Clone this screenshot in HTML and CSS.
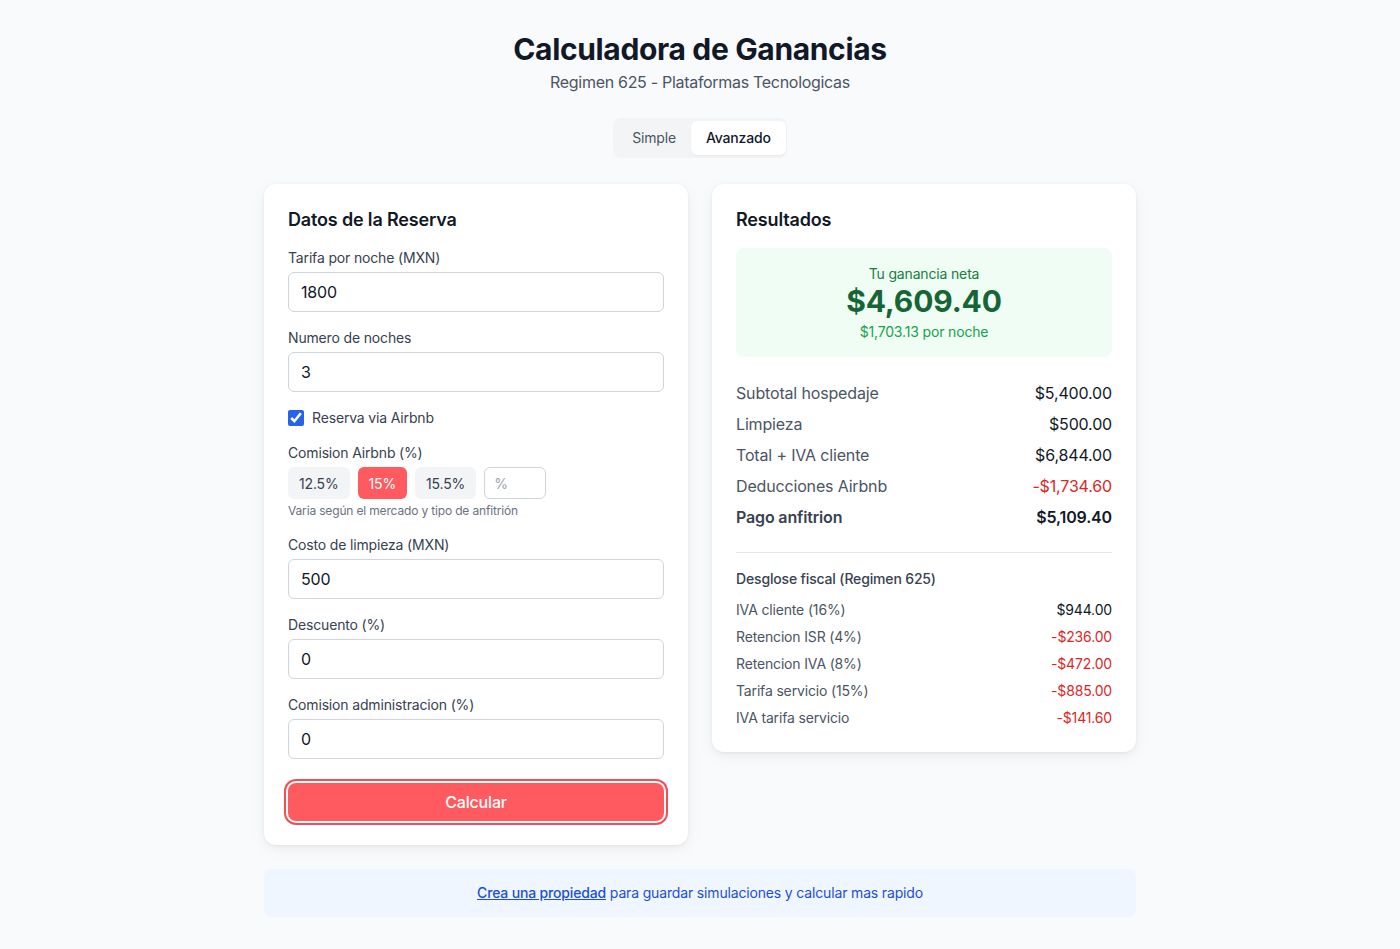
FILE: index.html
```html
<!DOCTYPE html>
<html lang="es">
<head>
<meta charset="utf-8">
<title>Calculadora de Ganancias</title>
<link rel="stylesheet" href="styles.css">
</head>
<body>
<main class="page">
  <header class="header">
    <h1 class="title">Calculadora de Ganancias</h1>
    <p class="subtitle">Regimen 625 - Plataformas Tecnologicas</p>
  </header>

  <div class="toggle-wrap">
    <div class="toggle">
      <button class="tab">Simple</button>
      <button class="tab tab-active">Avanzado</button>
    </div>
  </div>

  <div class="grid">
    <section class="card">
      <h2 class="card-title">Datos de la Reserva</h2>
      <div class="fields">
        <div class="field">
          <label class="label">Tarifa por noche (MXN)</label>
          <input class="input" type="text" value="1800">
        </div>
        <div class="field">
          <label class="label">Numero de noches</label>
          <input class="input" type="text" value="3">
        </div>
        <label class="check-row">
          <input class="check" type="checkbox" checked>
          <span>Reserva via Airbnb</span>
        </label>
        <div class="field">
          <label class="label">Comision Airbnb (%)</label>
          <div class="pct-row">
            <button class="pct">12.5%</button>
            <button class="pct pct-active">15%</button>
            <button class="pct">15.5%</button>
            <input class="pct-input" type="text" placeholder="%">
          </div>
          <p class="help">Varia según el mercado y tipo de anfitrión</p>
        </div>
        <div class="field">
          <label class="label">Costo de limpieza (MXN)</label>
          <input class="input" type="text" value="500">
        </div>
        <div class="field">
          <label class="label">Descuento (%)</label>
          <input class="input" type="text" value="0">
        </div>
        <div class="field">
          <label class="label">Comision administracion (%)</label>
          <input class="input" type="text" value="0">
        </div>
      </div>
      <button class="submit">Calcular</button>
    </section>

    <section class="card card-results">
      <h2 class="card-title">Resultados</h2>
      <div class="net">
        <div class="net-label">Tu ganancia neta</div>
        <div class="net-amount">$4,609.40</div>
        <div class="net-sub">$1,703.13 por noche</div>
      </div>
      <div class="rows">
        <div class="row"><span>Subtotal hospedaje</span><span class="val">$5,400.00</span></div>
        <div class="row"><span>Limpieza</span><span class="val">$500.00</span></div>
        <div class="row"><span>Total + IVA cliente</span><span class="val">$6,844.00</span></div>
        <div class="row"><span>Deducciones Airbnb</span><span class="val neg">-$1,734.60</span></div>
        <div class="row row-strong"><span>Pago anfitrion</span><span class="val">$5,109.40</span></div>
      </div>
      <div class="fiscal">
        <h3 class="fiscal-title">Desglose fiscal (Regimen 625)</h3>
        <div class="frows">
          <div class="frow"><span>IVA cliente (16%)</span><span class="val">$944.00</span></div>
          <div class="frow"><span>Retencion ISR (4%)</span><span class="val neg">-$236.00</span></div>
          <div class="frow"><span>Retencion IVA (8%)</span><span class="val neg">-$472.00</span></div>
          <div class="frow"><span>Tarifa servicio (15%)</span><span class="val neg">-$885.00</span></div>
          <div class="frow"><span>IVA tarifa servicio</span><span class="val neg">-$141.60</span></div>
        </div>
      </div>
    </section>
  </div>

  <div class="banner">
    <p class="banner-text"><a class="banner-link" href="#">Crea una propiedad</a> para guardar simulaciones y calcular mas rapido</p>
  </div>
</main>
</body>
</html>
```

FILE: styles.css
```css
* { box-sizing: border-box; }

html, body {
  margin: 0;
  padding: 0;
  background: #f9fafb;
  font-family: Inter, "Noto Sans", "Liberation Sans", sans-serif;
  color: #111827;
  letter-spacing: -0.01em;
}

.page {
  width: 872px;
  margin: 0 auto;
  padding-top: 31px;
  padding-bottom: 32px;
}

.header { text-align: center; }

.title {
  margin: 0;
  font-size: 30px;
  line-height: 36px;
  font-weight: 700;
  color: #111827;
  letter-spacing: -0.35px;
}

.subtitle {
  margin: 3px 0 0;
  font-size: 16px;
  line-height: 24px;
  color: #4b5563;
  letter-spacing: -0.3px;
}

.toggle-wrap {
  display: flex;
  justify-content: center;
  margin-top: 24px;
  margin-bottom: 26px;
}

.toggle {
  display: flex;
  background: #f3f4f6;
  border-radius: 8px;
  padding: 3px 1px 3px 4px;
}

.tab {
  border: none;
  background: transparent;
  font-family: inherit;
  font-size: 14px;
  line-height: 20px;
  letter-spacing: inherit;
  padding: 7px 15px;
  border-radius: 6px;
  color: #4b5563;
  cursor: pointer;
}

.tab-active {
  background: #ffffff;
  color: #111827;
  font-weight: 500;
  box-shadow: 0 1px 2px rgba(0,0,0,0.05);
}

.grid {
  display: grid;
  grid-template-columns: 1fr 1fr;
  gap: 24px;
  align-items: start;
}

.card {
  background: #ffffff;
  border-radius: 12px;
  padding: 24px;
  box-shadow: 0 4px 14px rgba(0,0,0,0.06), 0 1px 3px rgba(0,0,0,0.06);
}

.card-title {
  margin: 0 0 16px;
  font-size: 18px;
  line-height: 24px;
  font-weight: 600;
  color: #111827;
}

.fields {
  display: flex;
  flex-direction: column;
  gap: 16px;
}

.field { display: flex; flex-direction: column; }

.label {
  font-size: 14px;
  line-height: 20px;
  color: #374151;
  margin-bottom: 4px;
}

.input {
  height: 40px;
  border: 1px solid #d1d5db;
  border-radius: 6px;
  padding: 0 12px;
  font-family: inherit;
  font-size: 16px;
  letter-spacing: inherit;
  color: #111827;
  background: #fff;
  width: 100%;
}

.check-row {
  display: flex;
  align-items: center;
  gap: 8px;
  font-size: 14px;
  line-height: 20px;
  color: #374151;
  margin-bottom: -1px;
}

.check {
  width: 16px;
  height: 16px;
  margin: 0;
  accent-color: #2563eb;
}

.pct-row {
  display: flex;
  gap: 8px;
}

.pct {
  height: 32px;
  border: none;
  border-radius: 6px;
  background: #f3f4f6;
  color: #374151;
  font-family: inherit;
  font-size: 14px;
  letter-spacing: inherit;
  padding: 0 11px;
  cursor: pointer;
}

.pct-active {
  background: #ff5a5f;
  color: #ffffff;
}

.pct-input {
  width: 62px;
  height: 32px;
  border: 1px solid #d1d5db;
  border-radius: 6px;
  padding: 0 9px;
  font-family: inherit;
  font-size: 14px;
}

.pct-input::placeholder { color: #9ca3af; }

.help {
  margin: 4px 0 0;
  font-size: 12px;
  line-height: 16px;
  color: #6b7280;
}

.submit {
  display: block;
  width: 100%;
  margin-top: 24px;
  height: 38px;
  border: none;
  border-radius: 8px;
  background: #ff5a5f;
  color: #ffffff;
  font-family: inherit;
  font-size: 16px;
  letter-spacing: inherit;
  font-weight: 500;
  box-shadow: 0 0 0 2px #ffffff, 0 0 0 4px #ef4f55;
  cursor: pointer;
}

.net {
  background: #f0fdf4;
  border-radius: 8px;
  padding: 16px;
  text-align: center;
  height: 109px;
}

.net-label {
  font-size: 14px;
  line-height: 20px;
  color: #15803d;
}

.net-amount {
  font-size: 30px;
  line-height: 34px;
  font-weight: 700;
  color: #166534;
}

.net-sub {
  margin-top: 4px;
  font-size: 14px;
  line-height: 20px;
  color: #16a34a;
}

.rows {
  margin-top: 24px;
  display: flex;
  flex-direction: column;
  gap: 7px;
  padding-bottom: 23px;
  border-bottom: 1px solid #e5e7eb;
}

.row {
  display: flex;
  justify-content: space-between;
  font-size: 16px;
  line-height: 24px;
  color: #4b5563;
}

.row-strong { font-weight: 600; color: #374151; }
.row-strong .val { font-weight: 600; }

.val { color: #111827; }
.neg { color: #dc2626; }

.fiscal { padding-top: 16px; }

.fiscal-title {
  margin: 0 0 11px;
  font-size: 14px;
  line-height: 20px;
  font-weight: 500;
  color: #374151;
}

.frows {
  display: flex;
  flex-direction: column;
  gap: 7px;
}

.frow {
  display: flex;
  justify-content: space-between;
  font-size: 14px;
  line-height: 20px;
  color: #4b5563;
}

.banner {
  margin-top: 24px;
  background: #eff6ff;
  border-radius: 8px;
  padding: 14px 16px;
  text-align: center;
}

.banner-text {
  margin: 0;
  font-size: 14px;
  line-height: 20px;
  color: #1d4ed8;
}

.banner-link {
  color: #1d4ed8;
  font-weight: 500;
  text-decoration: underline;
}
```
